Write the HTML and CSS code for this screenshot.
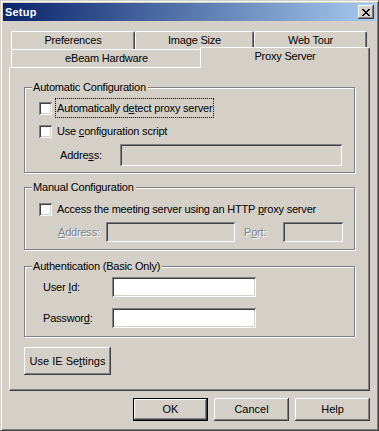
FILE: index.html
```html
<!DOCTYPE html>
<html>
<head>
<meta charset="utf-8">
<title>Setup</title>
<link rel="stylesheet" href="styles.css">
</head>
<body>
<div class="window">
	<div class="titlebar">
		<span class="title">Setup</span>
		<button class="close">
			<svg width="8" height="7" viewBox="0 0 8 7" shape-rendering="crispEdges"><path d="M0 0h2v1h-2z M6 0h2v1h-2z M1 1h2v1h-2z M5 1h2v1h-2z M2 2h4v1h-4z M3 3h2v1h-2z M2 4h4v1h-4z M1 5h2v1h-2z M5 5h2v1h-2z M0 6h2v1h-2z M6 6h2v1h-2z" fill="#000"/></svg>
		</button>
	</div>

	<div class="tabs">
		<div class="tab-row">
			<div class="tab pref">Preferences</div>
			<div class="tab size">Image Size</div>
			<div class="tab tour">Web Tour</div>
		</div>
		<div class="tab-row">
			<div class="tab hw">eBeam Hardware</div>
			<div class="tab proxy on">Proxy Server</div>
		</div>
	</div>

	<div class="panel">
		<div class="group auto">
			<div class="legend">Automatic Configuration</div>
			<div class="check">
				<input type="checkbox">
				<span class="label focus">Automatically d<u>e</u>tect proxy server</span>
			</div>
			<div class="check">
				<input type="checkbox">
				<span class="label">Use <u>c</u>onfiguration script</span>
			</div>
			<div class="field">
				<span class="name addr-auto">Addre<u>s</u>s:</span>
				<input type="text" class="edit off addr-auto-box" disabled>
			</div>
		</div>

		<div class="group manual">
			<div class="legend">Manual Configuration</div>
			<div class="check">
				<input type="checkbox">
				<span class="label">Access the meeting server using an HTTP <u>p</u>roxy server</span>
			</div>
			<div class="field">
				<span class="name dim addr-man"><u>A</u>ddress:</span>
				<input type="text" class="edit off addr-man-box" disabled>
				<span class="name dim port">P<u>o</u>rt:</span>
				<input type="text" class="edit off port-box" disabled>
			</div>
		</div>

		<div class="group auth">
			<div class="legend">Authentication (Basic Only)</div>
			<div class="field">
				<span class="name user">User <u>I</u>d:</span>
				<input type="text" class="edit user-box">
			</div>
			<div class="field">
				<span class="name user">Passwor<u>d</u>:</span>
				<input type="password" class="edit user-box">
			</div>
		</div>

		<button class="btn ie">Use IE Se<u>t</u>tings</button>
	</div>

	<div class="buttons">
		<button class="btn default">OK</button>
		<button class="btn">Cancel</button>
		<button class="btn">Help</button>
	</div>
</div>
</body>
</html>
```

FILE: styles.css
```css
body
{
	margin: 0;
	background: #d4d0c8;
	font: 11px/13px "Liberation Sans", Arial, sans-serif;
	letter-spacing: -0.2px;
	color: #000;
}
u
{
	text-decoration: underline;
	text-underline-offset: 1px;
}

/* window frame */
.window
{
	width: 379px;
	height: 431px;
	box-sizing: border-box;
	border: 1px solid;
	border-color: #d4d0c8 #404040 #404040 #d4d0c8;
	box-shadow: inset 1px 1px #fff, inset -1px -1px #808080;
	padding: 2px;
	background: #d4d0c8;
}
.titlebar
{
	height: 18px;
	display: flex;
	align-items: center;
	background: linear-gradient(to right, #0a246a, #a6caf0);
}
.title
{
	flex: 1;
	margin-left: 2px;
	color: #fff;
	font-weight: bold;
	letter-spacing: 0.2px;
}
.close
{
	width: 16px;
	height: 14px;
	margin: 0 2px 0 0;
	padding: 0;
	border: none;
	background: #d4d0c8;
	box-shadow: inset -1px -1px #404040, inset 1px 1px #fff, inset -2px -2px #808080;
	display: flex;
	align-items: center;
	justify-content: center;
}
.close svg
{
	display: block;
}

/* tabs */
.tabs
{
	margin: 10px 0 0 8px;
}
.tab-row
{
	display: flex;
	height: 18px;
}
.tab
{
	box-sizing: border-box;
	height: 18px;
	border: 1px solid #fff;
	border-right-color: #404040;
	border-bottom: none;
	border-radius: 2px 2px 0 0;
	box-shadow: inset -1px 0 #808080;
	padding-top: 2px;
	text-align: center;
	background: #d4d0c8;
}
.tab.on
{
	height: 21px;
	margin: -2px -2px -1px;
	position: relative;
	z-index: 1;
}
.pref { width: 124px; }
.size { width: 119px; }
.tour { width: 113px; }
.hw { width: 191px; }
.proxy { width: 170px; }

/* page */
.panel
{
	width: 361px;
	height: 324px;
	margin-left: 6px;
	box-sizing: border-box;
	border: 1px solid #fff;
	border-right-color: #404040;
	border-bottom-color: #404040;
	box-shadow: inset -1px -1px #808080;
	padding: 19px 0 0 14px;
	display: flex;
	flex-direction: column;
	align-items: flex-start;
}
.group
{
	width: 331px;
	box-sizing: border-box;
	border: 1px solid #808080;
	box-shadow: 1px 1px #fff, inset 1px 1px #fff;
	padding-left: 14px;
	display: flex;
	flex-direction: column;
	align-items: flex-start;
}
.auto { height: 86px; }
.manual { height: 63px; margin-top: 14px; }
.auth { height: 71px; margin-top: 16px; }

.legend
{
	margin: -7px 0 0 -7px;
	padding: 0 2px 0 1px;
	background: #d4d0c8;
}

.check
{
	display: flex;
	align-items: flex-start;
	margin-top: 5px;
}
.manual .check
{
	margin-top: 6px;
}
.check input
{
	appearance: none;
	width: 13px;
	height: 13px;
	margin: 3px 0 0;
	background: #fff;
	box-shadow: inset 1px 1px #808080, inset -1px -1px #fff, inset 2px 2px #404040, inset -2px -2px #d4d0c8;
}
.label
{
	margin-left: 4px;
	padding: 3px 1px 2px;
}
.focus
{
	outline: 1px dotted #000;
}

.field
{
	display: flex;
	align-items: center;
	margin-top: 4px;
}
.auth .field + .field
{
	margin-top: 11px;
}
.name
{
	box-sizing: border-box;
}
.dim
{
	color: #808080;
	text-shadow: 1px 1px #fff;
}
.edit
{
	appearance: none;
	border: none;
	margin: 0;
	padding: 0;
	height: 20px;
	background: #fff;
	box-shadow: inset 1px 1px #808080, inset -1px -1px #fff, inset 2px 2px #404040, inset -2px -2px #d4d0c8;
}
.edit.off
{
	background: #d4d0c8;
}
.addr-auto { margin-left: 21px; width: 60px; }
.addr-auto-box { width: 222px; height: 22px; }
.addr-man { margin-left: 19px; width: 48px; }
.addr-man-box { width: 129px; }
.port { margin-left: 9px; width: 39px; }
.port-box { width: 60px; }
.user { margin-left: 4px; width: 69px; }
.user-box { width: 144px; }

/* buttons */
.btn
{
	font: inherit;
	color: #000;
	width: 75px;
	height: 23px;
	margin: 0;
	padding: 0;
	border: none;
	box-sizing: border-box;
	background: #d4d0c8;
	box-shadow: inset -1px -1px #404040, inset 1px 1px #fff, inset -2px -2px #808080;
}
.btn.default
{
	border: 1px solid #000;
}
.ie
{
	width: 87px;
	height: 28px;
	margin-top: 10px;
}
.buttons
{
	display: flex;
	justify-content: flex-end;
	gap: 6px;
	margin: 7px 6px 0 0;
}
```
